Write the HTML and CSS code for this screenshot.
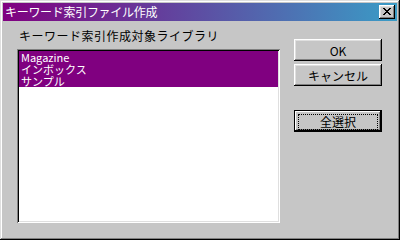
FILE: index.html
```html
<!DOCTYPE html>
<html lang="ja">
<head>
<meta charset="UTF-8">
<title>キーワード索引ファイル作成</title>
<link rel="stylesheet" href="styles.css">
</head>
<body>
    <div class="window">
        <div class="title-bar">
            <span class="title-text">キーワード索引ファイル作成</span>
            <button class="close-btn">
                <svg width="8" height="7" viewBox="0 0 8 7" shape-rendering="crispEdges">
                    <path d="M0 0h2v1h-2zM6 0h2v1h-2zM1 1h2v1h-2zM5 1h2v1h-2zM2 2h4v1h-4zM3 3h2v1h-2zM2 4h4v1h-4zM1 5h2v1h-2zM5 5h2v1h-2zM0 6h2v1h-2zM6 6h2v1h-2z" fill="#000"/>
                </svg>
            </button>
        </div>
        <div class="content">
            <div class="left-col">
                <div class="label">キーワード索引作成対象ライブラリ</div>
                <div class="list-box">
                    <div class="list-item selected">Magazine</div>
                    <div class="list-item selected">インボックス</div>
                    <div class="list-item selected">サンプル</div>
                </div>
            </div>
            <div class="right-col">
                <button class="btn">OK</button>
                <button class="btn">キャンセル</button>
                <button class="btn btn-default"><span class="focus">全選択</span></button>
            </div>
        </div>
    </div>
</body>
</html>
```

FILE: styles.css
```css
body{
    margin: 0;
    font-family: "Noto Sans CJK JP", "DejaVu Sans", sans-serif;
    font-size: 12px;
}
.window{
    width: 400px;
    height: 240px;
    box-sizing: border-box;
    background: #c6c6c6;
    padding: 3px;
    box-shadow: inset -1px -1px #000, inset 1px 1px #dfdfdf, inset -2px -2px #808080, inset 2px 2px #fff;
    display: flex;
    flex-direction: column;
}
.title-bar{
    height: 18px;
    background: linear-gradient(to right, #800080, #3a9cc6);
    display: flex;
    align-items: center;
    justify-content: space-between;
    padding: 0 2px 0 2px;
}
.title-text{
    color: #fff;
    line-height: 14px;
    letter-spacing: -0.3px;
}
.close-btn{
    width: 16px;
    height: 14px;
    padding: 0;
    border: none;
    background: #c6c6c6;
    box-shadow: inset -1px -1px #000, inset 1px 1px #fff, inset -2px -2px #808080, inset 2px 2px #dfdfdf;
    display: flex;
    align-items: center;
    justify-content: center;
}
.close-btn svg{
    display: block;
    margin: 0 1px 1px 0;
}
.content{
    flex: 1;
    display: flex;
    padding: 7px 0 0 14px;
}
.left-col{
    width: 263px;
}
.label{
    line-height: 14px;
    padding-left: 2px;
    height: 14px;
    margin-top: 1px;
    letter-spacing: 0.5px;
}
.list-box{
    margin-top: 6px;
    height: 174px;
    box-sizing: border-box;
    background: #fff;
    padding: 2px;
    box-shadow: inset 1px 1px #808080, inset -1px -1px #fff, inset 2px 2px #000, inset -2px -2px #dfdfdf;
}
.list-item{
    height: 12px;
    line-height: 12px;
    font-size: 11px;
    padding-left: 2px;
    color: #000;
}
.list-item.selected{
    background: #800080;
    color: #fff;
}
.right-col{
    margin-left: 14px;
    display: flex;
    flex-direction: column;
    padding-top: 11px;
}
.btn{
    width: 88px;
    height: 22px;
    padding: 0;
    border: none;
    background: #c6c6c6;
    font-family: inherit;
    font-size: 12px;
    color: #000;
    box-shadow: inset -1px -1px #000, inset 1px 1px #fff, inset -2px -2px #808080, inset 2px 2px #dfdfdf;
    margin-bottom: 3px;
}
.btn-default{
    margin-top: 21px;
    padding: 4px;
    box-shadow: inset 0 0 0 1px #000, inset -2px -2px #000, inset 2px 2px #fff, inset -3px -3px #808080;
}
.focus{
    display: block;
    height: 14px;
    line-height: 14px;
    border: 1px dotted #000;
}
```
